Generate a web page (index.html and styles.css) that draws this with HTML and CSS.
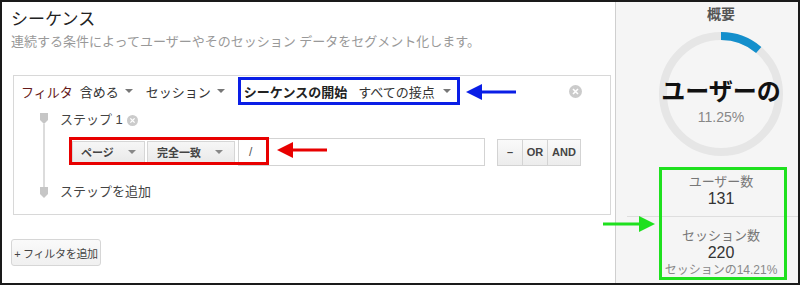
FILE: index.html
```html
<!DOCTYPE html>
<html lang="ja">
  <head>
    <meta charset="UTF-8" />
    <title>シーケンス</title>
    <link rel="stylesheet" href="styles.css">
  </head>

  <body>
    <div class="frame">
      <main class="editor">
        <h1 class="title">シーケンス</h1>
        <p class="lead">連続する条件によってユーザーやそのセッション データをセグメント化します。</p>

        <section class="filter">
          <div class="filter-head">
            <span class="label">フィルタ</span>
            <span class="drop">含める<i class="caret"></i></span>
            <span class="drop">セッション<i class="caret"></i></span>
            <span class="mark-blue">
              <span class="drop seq"><b>シーケンスの開始</b><span class="seq-val">すべての接点</span><i class="caret"></i></span>
            </span>
            <svg class="remove" width="13" height="13" viewBox="0 0 13 13">
              <circle cx="6.5" cy="6.5" r="6.5" fill="#cbcbcb" />
              <path d="M4 4 L9 9 M9 4 L4 9" stroke="#fff" stroke-width="1.6" />
            </svg>
          </div>

          <div class="steps">
            <div class="rail">
              <svg class="pin" width="8" height="11" viewBox="0 0 8 11"><path d="M0 0 H8 V7 L4 11 L0 7Z" fill="#c6c6c6" /></svg>
              <div class="line"></div>
              <svg class="pin" width="8" height="11" viewBox="0 0 8 11"><path d="M0 0 H8 V7 L4 11 L0 7Z" fill="#c6c6c6" /></svg>
            </div>
            <div class="step-body">
              <div class="step-title">ステップ 1
                <svg width="11" height="11" viewBox="0 0 13 13">
                  <circle cx="6.5" cy="6.5" r="6.5" fill="#cbcbcb" />
                  <path d="M4 4 L9 9 M9 4 L4 9" stroke="#fff" stroke-width="1.6" />
                </svg>
              </div>
              <div class="cond">
                <span class="btn dim">ページ<i class="caret"></i></span>
                <span class="btn match">完全一致<i class="caret"></i></span>
                <span class="input">/</span>
                <span class="ops">
                  <span class="op">–</span>
                  <span class="op">OR</span>
                  <span class="op">AND</span>
                </span>
              </div>
              <div class="step-add">ステップを追加</div>
            </div>
          </div>
        </section>

        <button class="add-filter">+ フィルタを追加</button>
      </main>

      <aside class="summary">
        <h2 class="sum-title">概要</h2>
        <div class="donut">
          <svg width="124" height="124" viewBox="0 0 124 124">
            <circle cx="62" cy="62" r="58" fill="none" stroke="#e6e6e6" stroke-width="8" />
            <circle cx="62" cy="62" r="58" fill="none" stroke="#148fcc" stroke-width="8"
              stroke-dasharray="41 400" transform="rotate(-90 62 62)" />
          </svg>
          <div class="donut-text">
            <div class="big">ユーザーの</div>
            <div class="pct">11.25%</div>
          </div>
        </div>
        <div class="stat">
          <div class="stat-label">ユーザー数</div>
          <div class="stat-num">131</div>
        </div>
        <div class="divider"></div>
        <div class="stat">
          <div class="stat-label">セッション数</div>
          <div class="stat-num">220</div>
          <div class="stat-sub">セッションの14.21%</div>
        </div>
      </aside>

      <!-- annotations -->
      <div class="mark-red"></div>
      <div class="mark-green"></div>
      <svg class="arrow arrow-blue" width="50" height="16" viewBox="0 0 50 16">
        <polygon points="0,8 16,0 16,16" fill="#0a1ee6" />
        <rect x="14" y="6.5" width="36" height="3" fill="#0a1ee6" />
      </svg>
      <svg class="arrow arrow-red" width="50" height="16" viewBox="0 0 50 16">
        <polygon points="0,8 16,0 16,16" fill="#e80000" />
        <rect x="14" y="6.5" width="36" height="3" fill="#e80000" />
      </svg>
      <svg class="arrow arrow-green" width="52" height="16" viewBox="0 0 52 16">
        <polygon points="52,8 36,0 36,16" fill="#1ee01e" />
        <rect x="0" y="6.5" width="38" height="3" fill="#1ee01e" />
      </svg>
    </div>
  </body>
</html>
```

FILE: styles.css
```css
* {
  box-sizing: border-box;
}

body {
  margin: 0;
  font-family: "Liberation Sans", "Noto Sans CJK JP", sans-serif;
  color: #333;
}

.frame {
  position: relative;
  display: flex;
  width: 800px;
  height: 285px;
  border: 2px solid #1a1a1a;
  background: #fff;
  overflow: hidden;
}

.editor {
  width: 613px;
  padding: 8px 0 0 9px;
}

.title {
  margin: 0;
  font-size: 17px;
  line-height: 20px;
  font-weight: normal;
  color: #222;
}

.lead {
  margin: 3px 0 0;
  font-size: 13px;
  line-height: 18px;
  color: #999;
}

.filter {
  margin: 24px 0 0 2px;
  width: 598px;
  border: 1px solid #d8d8d8;
  padding: 1px 0 13px;
}

.filter-head {
  display: flex;
  align-items: center;
  height: 28px;
  padding-left: 7px;
  font-size: 13px;
}

.label {
  color: #661a1a;
  margin-right: 7px;
}

.drop {
  display: flex;
  align-items: center;
  margin-right: 13px;
  color: #333;
}

.caret {
  display: inline-block;
  width: 0;
  height: 0;
  margin-left: 6px;
  border-left: 4px solid transparent;
  border-right: 4px solid transparent;
  border-top: 4px solid #777;
}

.mark-blue {
  display: flex;
  align-items: center;
  height: 28px;
  width: 222px;
  border: 3px solid #0a1ee6;
  padding-left: 3px;
  margin-left: 0;
}

.seq {
  margin-right: 0;
}

.seq b {
  font-weight: 600;
  color: #222;
}

.seq-val {
  margin-left: 11px;
}

.seq .caret {
  margin-left: 8px;
}

.remove {
  margin-left: auto;
  margin-right: 28px;
}

.steps {
  display: flex;
  margin: 6px 0 0 26px;
}

.rail {
  display: flex;
  flex-direction: column;
  align-items: center;
  width: 8px;
  padding: 2px 0 3px;
}

.pin {
  display: block;
}

.line {
  flex: 1;
  width: 2px;
  background: #dcdcdc;
}

.step-body {
  margin-left: 12px;
  flex: 1;
}

.step-title {
  display: flex;
  align-items: center;
  gap: 4px;
  font-size: 13px;
  line-height: 18px;
  color: #444;
}

.cond {
  display: flex;
  align-items: center;
  margin: 9px 0 0 12px;
  height: 28px;
}

.btn {
  display: flex;
  align-items: center;
  height: 23px;
  padding: 0 8px;
  font-size: 11px;
  font-weight: bold;
  color: #444;
  border: 1px solid #d6d6d6;
  background: linear-gradient(#f6f6f6, #e9e9e9);
}

.btn .caret {
  margin-left: 14px;
  border-top-color: #888;
}

.dim {
  width: 73px;
}

.match {
  width: 88px;
  margin-left: 2px;
  padding-left: 9px;
}

.input {
  display: flex;
  align-items: center;
  width: 247px;
  height: 28px;
  margin-left: 3px;
  padding-left: 10px;
  border: 1px solid #d3d3d3;
  font-size: 12px;
  color: #555;
}

.ops {
  display: flex;
  margin-left: 12px;
  height: 27px;
}

.op {
  display: flex;
  align-items: center;
  justify-content: center;
  border: 1px solid #d3d3d3;
  margin-left: -1px;
  background: linear-gradient(#fafafa, #ececec);
  font-size: 11px;
  font-weight: bold;
  color: #444;
  width: 26px;
}

.op:first-child {
  margin-left: 0;
}

.op:last-child {
  width: 34px;
}

.step-add {
  margin-top: 17px;
  font-size: 13px;
  line-height: 18px;
  color: #444;
}

.add-filter {
  display: block;
  margin-top: 24px;
  width: 90px;
  height: 27px;
  padding: 0;
  border: 1px solid #d6d6d6;
  border-radius: 3px;
  background: linear-gradient(#fafafa, #f0f0f0);
  font-family: inherit;
  font-size: 11px;
  letter-spacing: -0.3px;
  color: #444;
}

.summary {
  flex: 1;
  border-left: 1px solid #cfcfcf;
  background: #f5f5f5;
  padding: 4px 0 0 28px;
  text-align: center;
}

.sum-title {
  margin: 0;
  font-size: 14px;
  line-height: 16px;
  color: #555;
}

.donut {
  display: grid;
  justify-content: center;
  margin-top: 10px;
  height: 124px;
}

.donut svg,
.donut-text {
  grid-area: 1 / 1;
}

.donut-text {
  padding-top: 46px;
}

.big {
  font-size: 24px;
  line-height: 28px;
  font-weight: bold;
  color: #111;
  white-space: nowrap;
  margin: 0 -10px;
}

.pct {
  margin-top: 2px;
  font-size: 14px;
  line-height: 18px;
  color: #888;
}

.stat {
  padding-top: 18px;
}

.stat + .divider + .stat {
  padding-top: 11px;
}

.stat-label {
  font-size: 13px;
  line-height: 16px;
  color: #777;
}

.stat-num {
  font-size: 16px;
  line-height: 17px;
  color: #333;
}

.stat-sub {
  font-size: 12px;
  line-height: 18px;
  color: #888;
}

.divider {
  height: 1px;
  margin: 9px 0 0 -17px;
  background: #dedede;
}

.mark-red {
  position: absolute;
  left: 67px;
  top: 135px;
  width: 200px;
  height: 28px;
  border: 3px solid #e80000;
}

.mark-green {
  position: absolute;
  left: 657px;
  top: 165px;
  width: 128px;
  height: 113px;
  border: 3px solid #1ee01e;
}

.arrow {
  position: absolute;
}

.arrow-blue {
  left: 464px;
  top: 82px;
}

.arrow-red {
  left: 275px;
  top: 140px;
}

.arrow-green {
  left: 601px;
  top: 214px;
}
```
